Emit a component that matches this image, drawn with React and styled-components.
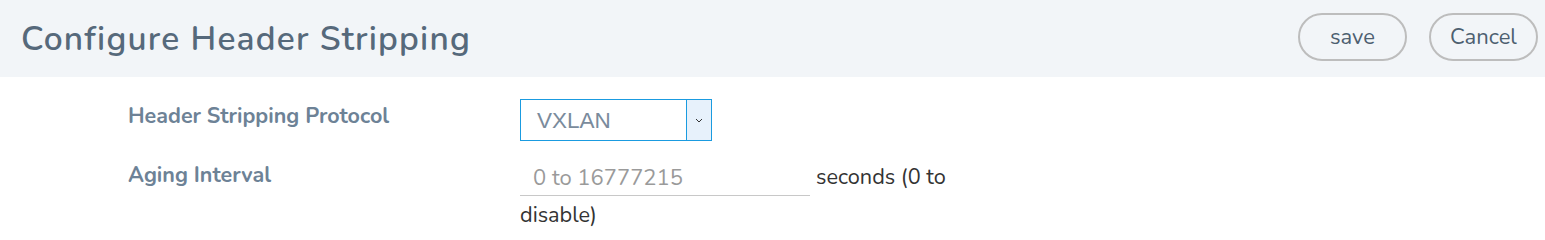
import React from "react";
import styled, { createGlobalStyle } from "styled-components";

const GlobalStyle = createGlobalStyle`
  body {
    margin: 0;
    background: #fff;
    font-family: "Nunito", "Lato", "Noto Sans", sans-serif;
  }
`;

// header bar
const Header = styled.div`
  height: 77px;
  box-sizing: border-box;
  background: #f2f5f8;
  display: flex;
  align-items: center;
  justify-content: space-between;
  padding: 0 7px 4px 21px;
`;

const Title = styled.h1`
  font-size: 33.5px;
  font-weight: 600;
  letter-spacing: 1.2px;
  color: #56697b;
  margin: 0;
  padding: 4px 0 0 0;
`;

const Actions = styled.div`
  display: flex;
  gap: 22px;
`;

const PillButton = styled.button`
  width: 109px;
  height: 48px;
  border: 2px solid #bdbdbd;
  border-radius: 24px;
  background: transparent;
  font-family: inherit;
  font-size: 22px;
  color: #4d5f70;
  cursor: pointer;
  padding: 0;
`;

// form
const Form = styled.div`
  padding: 22px 0 0 128px;
`;

const Row = styled.div`
  display: grid;
  grid-template-columns: 392px 432px;
  margin-bottom: ${(p) => p.gap || 0}px;
`;

const Label = styled.div`
  font-size: 21.5px;
  font-weight: 700;
  color: #6d8296;
  padding-top: ${(p) => p.top || 0}px;
`;

const Select = styled.div`
  width: 192px;
  height: 42px;
  box-sizing: border-box;
  border: 1.5px solid #1a9be0;
  display: flex;
  align-items: stretch;
`;

const SelectValue = styled.div`
  flex: 1;
  display: flex;
  align-items: center;
  padding-left: 16px;
  font-size: 22.5px;
  color: #7a8b9c;
  font-family: "Liberation Sans", Arial, sans-serif;
  padding-top: 2px;
`;

const Arrow = styled.div`
  width: 24px;
  background: #e7f1fb;
  border-left: 1.5px solid #1a9be0;
  display: flex;
  align-items: center;
  justify-content: center;
`;

const Field = styled.div`
  font-size: 21.7px;
  line-height: 38px;
  color: #333;
`;

const TextInput = styled.input`
  width: 290px;
  height: 36px;
  box-sizing: border-box;
  border: none;
  border-bottom: 1px solid #c8c8c8;
  padding: 0 13px;
  font-family: inherit;
  font-size: 22px;
  color: #333;
  vertical-align: bottom;
  margin-right: 6px;
  outline: none;
  &::placeholder {
    color: #9a9a9a;
  }
`;

export default function App() {
  return (
    <>
      <GlobalStyle />
      <Header>
        <Title>Configure Header Stripping</Title>
        <Actions>
          <PillButton>save</PillButton>
          <PillButton>Cancel</PillButton>
        </Actions>
      </Header>
      <Form>
        <Row gap={17}>
          <Label top={2}>Header Stripping Protocol</Label>
          <Select>
            <SelectValue>VXLAN</SelectValue>
            <Arrow>
              <svg width="8" height="5" viewBox="0 0 8 5">
                <path d="M1 1l3 3 3-3" fill="none" stroke="#333" strokeWidth="1" />
              </svg>
            </Arrow>
          </Select>
        </Row>
        <Row>
          <Label top={2}>Aging Interval</Label>
          <Field>
            <TextInput placeholder="0 to 16777215" />
            seconds (0 to disable)
          </Field>
        </Row>
      </Form>
    </>
  );
}
